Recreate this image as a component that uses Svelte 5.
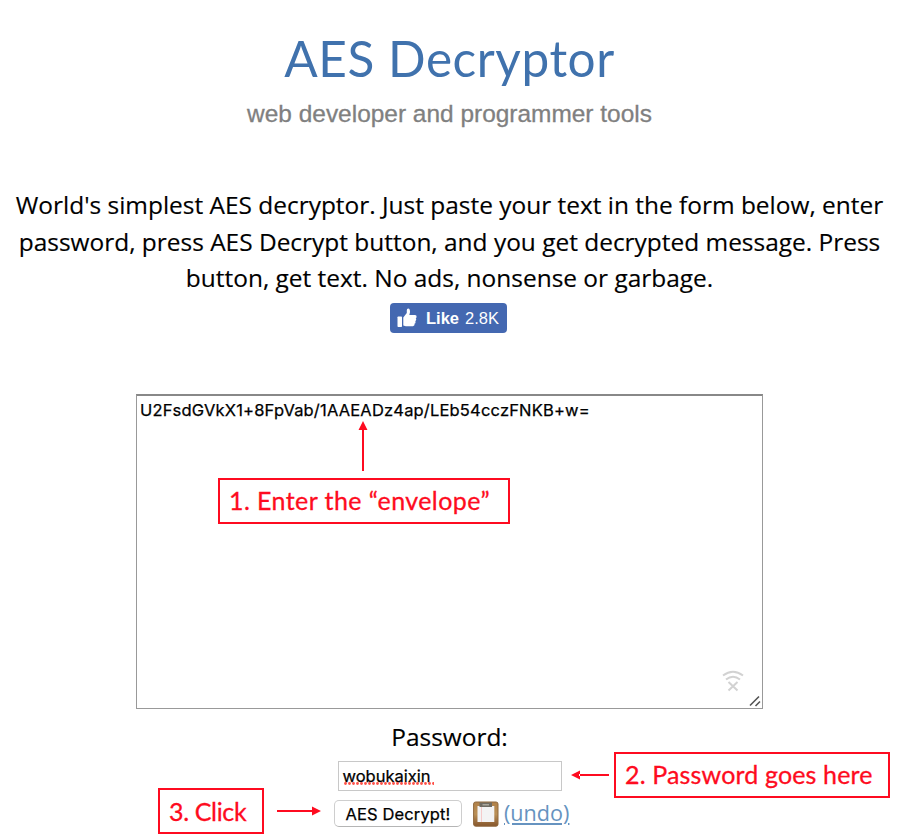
<script>
  const lines = [
    "World's simplest AES decryptor. Just paste your text in the form below, enter",
    'password, press AES Decrypt button, and you get decrypted message. Press',
    'button, get text. No ads, nonsense or garbage.'
  ];
  let message = $state('U2FsdGVkX1+8FpVab/1AAEADz4ap/LEb54cczFNKB+w=');
</script>

<main>
  <h1><span>AES Decryptor</span></h1>
  <h2><span>web developer and programmer tools</span></h2>
  <p class="intro">
    {#each lines as line}
      <span>{line}</span>
    {/each}
  </p>
  <button class="like">
    <svg width="20" height="20" viewBox="0 0 20 20" fill="#fff">
      <rect x="0.5" y="8.5" width="4.5" height="10.5" rx="0.7" />
      <path d="M6.3 9.4 L9.8 5.1 V2.2 Q9.8 .6 11.2 .6 Q13.2 .9 13 4.2 L12.3 7.1 H18 Q19.8 7.2 19.6 9 Q19.5 10 18.7 10.3 Q19.6 11 19.1 12.1 Q18.9 12.9 18.2 13.1 Q18.9 13.9 18.4 14.9 Q18.1 15.5 17.6 15.6 Q18 17.7 16 18.2 H8.8 L6.3 17.5 Z" />
    </svg>
    <b>Like</b><span>2.8K</span>
  </button>

  <section class="editor">
    <div class="message">{message}</div>
    <svg class="offline" width="22" height="22" viewBox="0 0 22 22" fill="none" stroke="#d2d2d2" stroke-width="2">
      <path d="M1 5.5 Q11 -2 21 5.5 M4 9.5 Q11 4 18 9.5 M6.5 12 L15.5 20.5 M15.5 12 L6.5 20.5" />
    </svg>
    <svg class="grip" width="12" height="12" viewBox="0 0 12 12" fill="none" stroke="#555" stroke-width="1.6">
      <path d="M1 10.5 L10 1.5 M6.5 11 L11 6.5" />
    </svg>
  </section>

  <div class="label">Password:</div>
  <div class="password"><span>wobukaixin</span>
    <svg width="90" height="3" viewBox="0 0 90 3"><path d="M1.5 1.5 H90" stroke="#ff5148" stroke-width="2.9" stroke-linecap="round" stroke-dasharray="0 4" /></svg>
  </div>
  <div class="actions">
    <button class="decrypt"><span>AES Decrypt!</span></button>
    <svg class="clip" width="26" height="26" viewBox="0 0 26 26">
      <defs><linearGradient id="wood" x2="0" y2="1"><stop stop-color="#b18149" /><stop offset=".5" stop-color="#ba9057" /><stop offset="1" stop-color="#86562c" /></linearGradient></defs>
      <rect x=".6" y="1" width="24.4" height="24.2" rx="2" fill="url(#wood)" stroke="#90683d" />
      <rect x="4.5" y="5" width="16.8" height="16" fill="#f3f3f4" />
      <path d="M8.5 5 V21" stroke="#f5caca" />
      <path d="M6.5 1.5 H19 V6 H6.5 Z" fill="#6f6b63" />
      <path d="M9.5 3 H16 V4.5 H9.5 Z" fill="#aaa69c" />
    </svg>
    <a href="#undo">(undo)</a>
  </div>

  <div class="note first"><span>1. Enter the “envelope”</span></div>
  <div class="note second"><span>2. Password goes here</span></div>
  <div class="note third"><span>3. Click</span></div>
  <svg class="arrows" width="900" height="840" viewBox="0 0 900 840" fill="#fe0b20">
    <path d="M362 429 H364 V471 H362 Z M358.5 430 L363 421 L367.5 430 Z" />
    <path d="M579 774 H609 V776 H579 Z M580 770.5 L571 775 L580 779.5 Z" />
    <path d="M277 810 H313 V812 H277 Z M312 806.5 L321 811 L312 815.5 Z" />
  </svg>
</main>

<style>
  :global(body) { margin: 0; background: #fff; }
  main { position: relative; box-sizing: border-box; width: 900px; height: 840px; padding: 28px 1px 0 0; overflow: hidden; display: flex; flex-direction: column; align-items: center; background: #fff; color: #000; font-family: "Open Sans", sans-serif; }
  span { white-space: nowrap; }
  h1 { margin: 0; font: 400 49.5px/60px Lato, sans-serif; letter-spacing: .55px; color: #4072ad; }
  h2 { margin: 11px 0 0; font: 400 24.45px/30px "Liberation Sans", sans-serif; color: #808080; -webkit-text-stroke: .3px #808080; }
  .intro { margin: 58px 0 0; display: flex; flex-direction: column; align-items: center; font-size: 24.45px; line-height: 36.7px; -webkit-text-stroke: .15px #000; }
  .like { display: flex; align-items: center; box-sizing: border-box; width: 117px; height: 30px; margin: 6px 2px 0 0; padding: 0 7px; border: 0; border-radius: 4px; background: #4468b1; color: #fff; font: 16.5px "Liberation Sans", sans-serif; }
  .like b { margin: 0 6px 0 9px; }
  .editor { position: relative; box-sizing: border-box; width: 627px; height: 315px; margin-top: 61px; border: 1.5px solid #999; border-top: 2px solid #888; background: #fff; }
  .message { margin: 3px 0 0 3px; font: 400 16.5px/22px Inter, sans-serif; letter-spacing: .18px; -webkit-text-stroke: .25px #000; }
  .offline { position: absolute; right: 18px; bottom: 16px; }
  .grip { position: absolute; right: 1px; bottom: 1px; }
  .label { height: 34px; margin-top: 11px; font-size: 24.45px; line-height: 34px; -webkit-text-stroke: .15px #000; }
  .password { position: relative; box-sizing: border-box; width: 224px; height: 30px; margin-top: 7px; padding: 4px; border: 1px solid #c8c8c8; font: 400 16.5px/20px Inter, sans-serif; -webkit-text-stroke: .25px #000; }
  .password svg { position: absolute; left: 5px; bottom: 5px; }
  .actions { display: flex; align-items: center; align-self: flex-start; margin: 9px 0 0 334px; }
  .decrypt { width: 128px; height: 27px; padding: 0; border: 1px solid #cecece; border-bottom-color: #b5b5b5; border-radius: 5px; background: #fff; color: #000; font: 400 16.5px/24px Inter, sans-serif; letter-spacing: .12px; -webkit-text-stroke: .25px #000; }
  .clip { margin-left: 11px; }
  a { margin-left: 5px; color: #6693c0; font-size: 21.6px; line-height: 27px; text-decoration: underline; text-decoration-thickness: 1.5px; text-underline-offset: 2px; transform: translateY(-1px); }
  .note { position: absolute; box-sizing: border-box; height: 46px; padding-left: 9px; border: 2px solid #fe0b20; color: #fe0b20; background: #fff; font: 400 25px/40px Lato, sans-serif; -webkit-text-stroke: .3px #fe0b20; }
  .first { left: 218px; top: 478px; width: 292px; letter-spacing: .42px; }
  .second { left: 614px; top: 752px; width: 276px; letter-spacing: .15px; }
  .third { left: 158px; top: 788px; width: 106px; line-height: 42px; letter-spacing: -.35px; }
  .arrows { position: absolute; inset: 0; pointer-events: none; }
</style>
